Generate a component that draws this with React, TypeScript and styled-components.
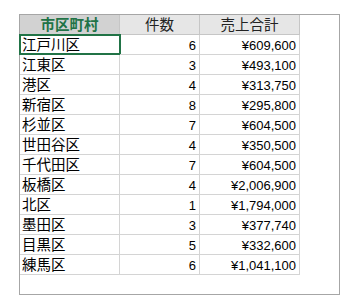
import { Fragment } from 'react';
import styled, { createGlobalStyle } from 'styled-components';

const GlobalStyle = createGlobalStyle`
  html, body {
    margin: 0;
    padding: 0;
    background: #fff;
  }
  body {
    font-family: "Liberation Sans", "Noto Sans CJK JP", sans-serif;
    color: #000;
  }
`;

const Page = styled.div`
  padding: 14px 0 0 19px;
`;

const Frame = styled.div`
  width: 319px;
  height: 279px;
  border: 1px solid #a6a6a6;
  background: #fff;
`;

const Grid = styled.div`
  display: grid;
  grid-template-columns: 100px 80px 100px;
  grid-auto-rows: 20px;
`;

const HeadCell = styled.div<{ $active?: boolean }>`
  box-sizing: border-box;
  display: flex;
  align-items: center;
  justify-content: center;
  font-family: "Noto Sans CJK JP", sans-serif;
  font-size: 14.5px;
  line-height: 1;
  background: ${(p) => (p.$active ? '#d2d2d2' : '#e6e6e6')};
  color: ${(p) => (p.$active ? '#217346' : '#222')};
  font-weight: ${(p) => (p.$active ? 700 : 400)};
  border-right: 1px solid #c6c6c6;
  border-bottom: 1px solid ${(p) => (p.$active ? '#217346' : '#c6c6c6')};
`;

const Cell = styled.div<{ $num?: boolean; $selected?: boolean }>`
  position: relative;
  box-sizing: border-box;
  display: flex;
  align-items: center;
  justify-content: ${(p) => (p.$num ? 'flex-end' : 'flex-start')};
  padding: ${(p) => (p.$num ? '1px 3px 0 0' : '0 0 0 2px')};
  font-family: ${(p) => (p.$num ? '"Liberation Sans", sans-serif' : '"Noto Sans CJK JP", sans-serif')};
  font-size: ${(p) => (p.$num ? '13px' : '14.5px')};
  line-height: 1;
  border-right: 1px solid #d4d4d4;
  border-bottom: 1px solid #d4d4d4;

  ${(p) =>
    p.$selected &&
    `
    &::after {
      content: '';
      position: absolute;
      top: -1px;
      left: -1px;
      right: -2px;
      bottom: -1px;
      border: 2px solid #217346;
      pointer-events: none;
    }
  `}
`;

type Row = { ward: string; count: number; sales: string };

const rows: Row[] = [
  { ward: '江戸川区', count: 6, sales: '¥609,600' },
  { ward: '江東区', count: 3, sales: '¥493,100' },
  { ward: '港区', count: 4, sales: '¥313,750' },
  { ward: '新宿区', count: 8, sales: '¥295,800' },
  { ward: '杉並区', count: 7, sales: '¥604,500' },
  { ward: '世田谷区', count: 4, sales: '¥350,500' },
  { ward: '千代田区', count: 7, sales: '¥604,500' },
  { ward: '板橋区', count: 4, sales: '¥2,006,900' },
  { ward: '北区', count: 1, sales: '¥1,794,000' },
  { ward: '墨田区', count: 3, sales: '¥377,740' },
  { ward: '目黒区', count: 5, sales: '¥332,600' },
  { ward: '練馬区', count: 6, sales: '¥1,041,100' },
];

const App = () => {
  return (
    <Page>
      <GlobalStyle />
      <Frame>
        <Grid>
          <HeadCell $active>市区町村</HeadCell>
          <HeadCell>件数</HeadCell>
          <HeadCell>売上合計</HeadCell>
          {rows.map((r, i) => (
            <Fragment key={r.ward}>
              <Cell $selected={i === 0}>{r.ward}</Cell>
              <Cell $num>{r.count}</Cell>
              <Cell $num>{r.sales}</Cell>
            </Fragment>
          ))}
        </Grid>
      </Frame>
    </Page>
  );
};

export default App;
